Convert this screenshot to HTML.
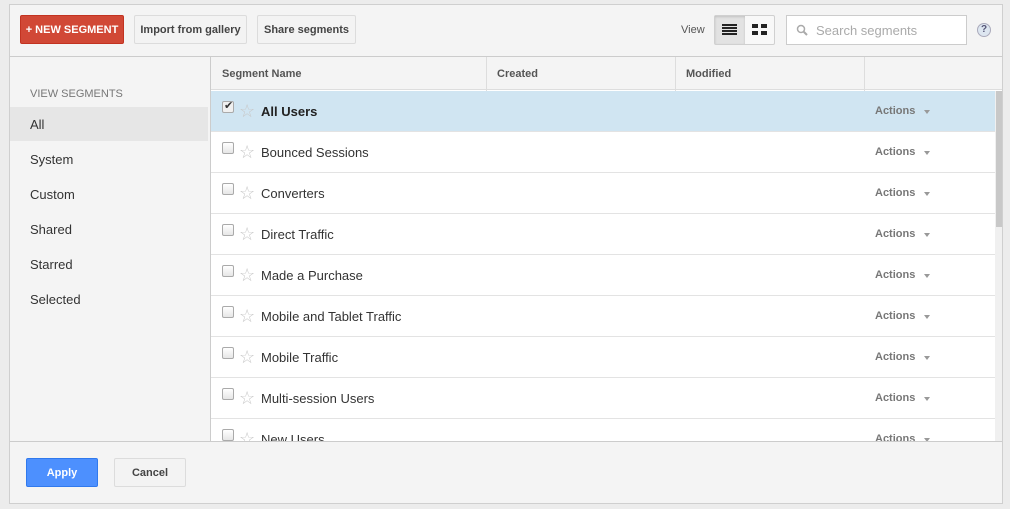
<!DOCTYPE html>
<html><head><style>
*{box-sizing:border-box;margin:0;padding:0}
body{width:1010px;height:509px;background:#ececec;font-family:"Liberation Sans",Arial,sans-serif;position:relative;overflow:hidden;color:#333}
.panel{position:absolute;left:9px;top:4px;width:994px;height:500px;background:#f4f4f4;border:1px solid #cfcfcf}
.btn{position:absolute;height:29px;font-size:11px;font-weight:bold;display:flex;align-items:center;justify-content:center;border-radius:2px}
.gbtn{background:#f3f3f3;border:1px solid #dcdcdc;color:#444}
.side{position:absolute;left:10px;top:57px;width:200px;height:384px;background:#f4f4f4}
.side div{position:absolute;left:20px;font-size:13px;color:#333}
.tbl{position:absolute;left:210px;top:56px;width:792px;height:385px;background:#fff;border-left:1px solid #ccc;overflow:hidden}
.hdr{position:absolute;left:0;top:0;width:792px;height:34px;background:#f4f4f4;border-bottom:1px solid #ddd;border-top:1px solid #ccc}
.hdr span{position:absolute;top:11px;font-size:11px;font-weight:bold;color:#555}
.hdr i{position:absolute;top:0;width:1px;height:34px;background:#ddd}
.row{position:absolute;left:0;width:784px;height:41px;border-bottom:1px solid #e3e3e3;background:#fff}
.row .cb{position:absolute;left:11px;top:10px;width:12px;height:12px;border:1px solid #aaa;border-radius:2px;background:linear-gradient(#fff,#e6e6e6)}
.row .st{position:absolute;left:28px;top:10px;font-size:18px;color:#c8c8c8;line-height:20px}
.row .nm{position:absolute;left:50px;top:13px;font-size:13px;color:#333}
.row .ac{position:absolute;left:664px;top:14px;font-size:11px;font-weight:bold;color:#777}
.row .ac:after{content:"";position:absolute;left:49px;top:5px;border:3.5px solid transparent;border-top:4px solid #999}
.foot{position:absolute;left:10px;top:441px;width:992px;height:62px;background:#f4f4f4;border-top:1px solid #ccc}
</style></head><body>
<div class="panel"></div>
<div style="position:absolute;left:10px;top:56px;width:992px;height:1px;background:#ccc"></div>
<div class="btn" style="left:20px;top:15px;width:104px;background:#d14836;color:#fff;border:1px solid #c23321">+ NEW SEGMENT</div>
<div class="btn gbtn" style="left:134px;top:15px;width:113px">Import from gallery</div>
<div class="btn gbtn" style="left:257px;top:15px;width:99px">Share segments</div>
<div style="position:absolute;left:681px;top:24px;font-size:11px;color:#555">View</div>
<div style="position:absolute;left:714px;top:15px;width:61px;height:30px;border:1px solid #d0d0d0;background:#f8f8f8;border-radius:2px"></div>
<div style="position:absolute;left:715px;top:16px;width:30px;height:28px;background:#e2e2e2;box-shadow:inset 0 1px 2px rgba(0,0,0,.15)"></div>
<svg style="position:absolute;left:722px;top:24px" width="16" height="12"><g fill="#222"><rect y="0" width="15" height="2"/><rect y="3" width="15" height="2"/><rect y="6" width="15" height="2"/><rect y="9" width="15" height="2"/></g></svg>
<svg style="position:absolute;left:752px;top:24px" width="16" height="12"><g fill="#222"><rect x="0" y="0" width="6" height="4"/><rect x="9" y="0" width="6" height="4"/><rect x="0" y="7" width="6" height="4"/><rect x="9" y="7" width="6" height="4"/></g></svg>
<div style="position:absolute;left:786px;top:15px;width:181px;height:30px;border:1px solid #ccc;background:#fff"></div>
<svg style="position:absolute;left:796px;top:24px" width="12" height="12"><circle cx="5" cy="5" r="3.5" fill="none" stroke="#aaa" stroke-width="1.5"/><line x1="7.5" y1="7.5" x2="11" y2="11" stroke="#aaa" stroke-width="2"/></svg>
<div style="position:absolute;left:816px;top:23px;font-size:13px;color:#aaa">Search segments</div>
<div style="position:absolute;left:977px;top:23px;width:14px;height:14px;border-radius:50%;background:#dde6f0;border:1px solid #aab;font-size:10px;font-weight:bold;color:#557;text-align:center;line-height:12px">?</div>
<div class="side">
<div style="top:31px;font-size:11px;color:#777">VIEW SEGMENTS</div>
<div style="left:0;top:50px;width:198px;height:34px;background:#e6e6e6"></div>
<div style="top:60px">All</div>
<div style="top:95px">System</div>
<div style="top:130px">Custom</div>
<div style="top:165px">Shared</div>
<div style="top:200px">Starred</div>
<div style="top:235px">Selected</div>
</div>
<div class="tbl">
<div class="hdr"><span style="left:11px">Segment Name</span><i style="left:275px"></i><span style="left:286px">Created</span><i style="left:464px"></i><span style="left:475px">Modified</span><i style="left:653px"></i></div>
<div class="row" style="top:35px;background:#d0e5f2"><div class="cb" style="background:#f0f0f0"></div><div style="position:absolute;left:13px;top:8px;font-size:11px;color:#333">✔</div><div class="st">☆</div><div class="nm" style="font-weight:bold;font-size:13px;color:#222">All Users</div><div class="ac">Actions</div></div>
<div class="row" style="top:76px"><div class="cb"></div><div class="st">☆</div><div class="nm">Bounced Sessions</div><div class="ac">Actions</div></div>
<div class="row" style="top:117px"><div class="cb"></div><div class="st">☆</div><div class="nm">Converters</div><div class="ac">Actions</div></div>
<div class="row" style="top:158px"><div class="cb"></div><div class="st">☆</div><div class="nm">Direct Traffic</div><div class="ac">Actions</div></div>
<div class="row" style="top:199px"><div class="cb"></div><div class="st">☆</div><div class="nm">Made a Purchase</div><div class="ac">Actions</div></div>
<div class="row" style="top:240px"><div class="cb"></div><div class="st">☆</div><div class="nm">Mobile and Tablet Traffic</div><div class="ac">Actions</div></div>
<div class="row" style="top:281px"><div class="cb"></div><div class="st">☆</div><div class="nm">Mobile Traffic</div><div class="ac">Actions</div></div>
<div class="row" style="top:322px"><div class="cb"></div><div class="st">☆</div><div class="nm">Multi-session Users</div><div class="ac">Actions</div></div>
<div class="row" style="top:363px"><div class="cb"></div><div class="st">☆</div><div class="nm">New Users</div><div class="ac">Actions</div></div>
<div style="position:absolute;left:784px;top:35px;width:8px;height:350px;background:#f0f0f0"></div>
<div style="position:absolute;left:785px;top:35px;width:6px;height:136px;background:#c8c8c8"></div>
</div>
<div class="foot">
<div class="btn" style="left:16px;top:16px;width:72px;background:#4d90fe;border:1px solid #3079ed;color:#fff">Apply</div>
<div class="btn gbtn" style="left:104px;top:16px;width:72px">Cancel</div>
</div>
</body></html>
